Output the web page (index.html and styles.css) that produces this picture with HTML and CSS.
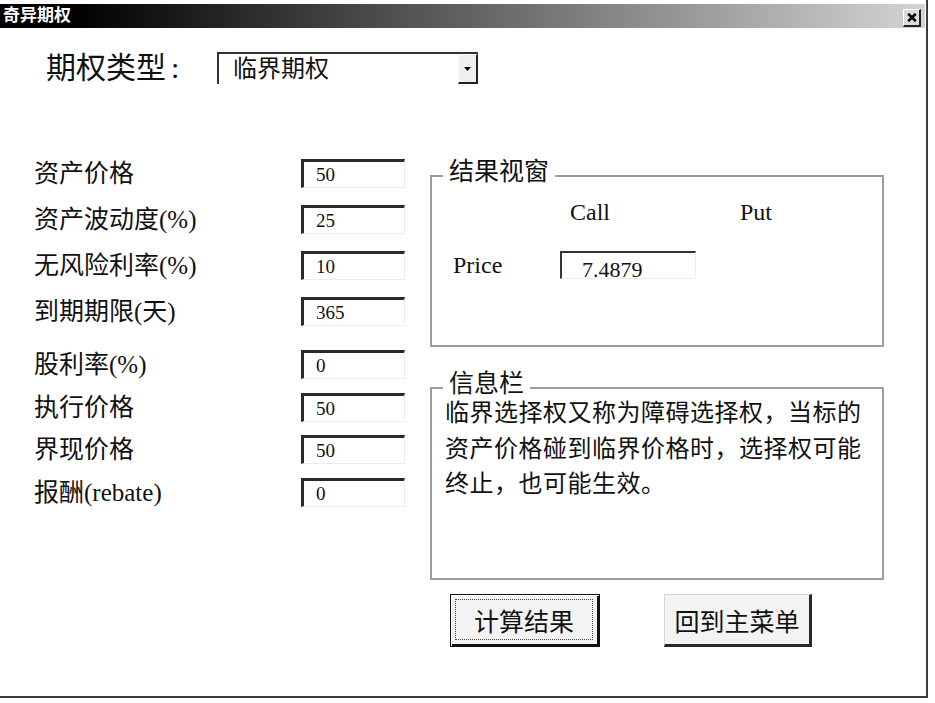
FILE: index.html
```html
<!DOCTYPE html>
<html lang="zh-CN">
<head>
<meta charset="utf-8">
<title>奇异期权</title>
<link rel="stylesheet" href="styles.css">
</head>
<body>
<div class="window">
  <div class="titlebar">
    <span class="title">奇异期权</span>
    <span class="close"><svg width="10" height="9" viewBox="0 0 10 9"><path d="M1.2 0.8 L8.8 8.2 M8.8 0.8 L1.2 8.2" stroke="#000" stroke-width="2.6" fill="none"/></svg></span>
  </div>
  <div class="type-row">
    <span class="type-label">期权类型<span class="colon">:</span></span>
    <div class="select">
      <span class="select-text">临界期权</span>
      <span class="select-btn"><svg width="7" height="4" viewBox="0 0 7 4"><path d="M0 0H7L3.5 4Z" fill="#000"/></svg></span>
    </div>
  </div>
  <div class="main">
    <div class="params">
      <div class="group g1">
        <div class="row"><span class="label">资产价格</span><span class="field">50</span></div>
        <div class="row"><span class="label">资产波动度(%)</span><span class="field">25</span></div>
        <div class="row"><span class="label">无风险利率(%)</span><span class="field">10</span></div>
        <div class="row"><span class="label">到期期限(天)</span><span class="field">365</span></div>
      </div>
      <div class="group g2">
        <div class="row"><span class="label">股利率(%)</span><span class="field">0</span></div>
        <div class="row"><span class="label">执行价格</span><span class="field">50</span></div>
        <div class="row"><span class="label">界现价格</span><span class="field">50</span></div>
        <div class="row"><span class="label">报酬(rebate)</span><span class="field">0</span></div>
      </div>
    </div>
    <div class="side">
      <fieldset class="frame result">
        <legend>结果视窗</legend>
        <div class="result-grid">
          <span></span><span class="col-head call">Call</span><span class="col-head">Put</span>
          <span class="price-label">Price</span><span class="price-box">7.4879</span><span></span>
        </div>
      </fieldset>
      <fieldset class="frame info">
        <legend>信息栏</legend>
        <p class="info-text">临界选择权又称为障碍选择权，当标的资产价格碰到临界价格时，选择权可能终止，也可能生效。</p>
      </fieldset>
      <div class="buttons">
        <button class="btn btn-default"><span class="focus">计算结果</span></button>
        <button class="btn btn-plain">回到主菜单</button>
      </div>
    </div>
  </div>
</div>
</body>
</html>
```
FILE: styles.css
```css
body {
  margin: 0;
  background: #fff;
  color: #111;
  font-family: "Liberation Serif", "Noto Sans CJK SC", serif;
}

.window {
  width: 928px;
  height: 698px;
  box-sizing: border-box;
  padding-top: 4px;
  border-right: 2px solid #3c3c3c;
  border-bottom: 2px solid #3c3c3c;
}

.titlebar {
  height: 24px;
  margin-right: 1px;
  display: flex;
  justify-content: space-between;
  align-items: flex-start;
  background: linear-gradient(to right, #000 0%, #000 8%, #d4d4d4 100%);
}

.title {
  color: #fff;
  font-family: "Noto Sans CJK SC", sans-serif;
  font-weight: 700;
  font-size: 17px;
  line-height: 20px;
  padding-left: 3px;
}

.close {
  margin: 5px 4px 0 0;
  width: 18px;
  height: 18px;
  box-sizing: border-box;
  background: #dcdcdc;
  border-top: 1px solid #fff;
  border-left: 1px solid #fff;
  border-right: 2px solid #222;
  border-bottom: 2px solid #222;
  display: flex;
  align-items: center;
  justify-content: center;
}

.type-row {
  display: flex;
  align-items: center;
  height: 32px;
  margin-top: 24px;
  padding-left: 46px;
}

.type-label {
  width: 171px;
  font-size: 30px;
  line-height: 32px;
  white-space: nowrap;
}

.colon {
  margin-left: 5px;
}

.select {
  width: 261px;
  height: 32px;
  box-sizing: border-box;
  border-top: 2px solid #333;
  border-left: 2px solid #333;
  display: flex;
}

.select-text {
  flex: 1;
  font-size: 24px;
  line-height: 30px;
  padding-left: 14px;
}

.select-btn {
  width: 20px;
  box-sizing: border-box;
  background: #efefef;
  border-top: 1px solid #fff;
  border-left: 1px solid #fff;
  border-right: 2px solid #222;
  border-bottom: 2px solid #222;
  display: flex;
  align-items: center;
  justify-content: center;
}

.main {
  display: flex;
  margin-top: 75px;
}

.params {
  padding-left: 34px;
}

.row {
  display: flex;
  align-items: center;
  height: 29px;
}

.g1 .row + .row {
  margin-top: 17px;
}

.g2 {
  margin-top: 24px;
}

.g2 .row + .row {
  margin-top: 13.5px;
}

.label {
  width: 267px;
  font-size: 25px;
  line-height: 29px;
  white-space: nowrap;
}

.field {
  width: 104px;
  height: 29px;
  box-sizing: border-box;
  border-top: 3px solid #2a2a2a;
  border-left: 3px solid #2a2a2a;
  border-right: 1px solid #ececec;
  border-bottom: 1px solid #ececec;
  padding-left: 12px;
  font-size: 19px;
  line-height: 25px;
}

.side {
  margin-left: 25px;
  width: 454px;
}

.frame {
  margin: 0;
  padding: 0;
  min-width: 0;
  border: 2px solid #9d9d9d;
}

.frame legend {
  font-size: 25px;
  line-height: 25px;
  padding: 0 6px 8px;
  margin-left: 11px;
}

.result-grid {
  display: grid;
  grid-template-columns: 107px 180px 1fr;
  grid-template-rows: 28px 28px;
  row-gap: 25px;
  align-content: start;
  height: 153px;
  box-sizing: border-box;
  padding: 6px 0 0 21px;
}

.col-head,
.price-label {
  font-size: 24px;
  line-height: 28px;
}

.call {
  padding-left: 10px;
}

.price-box {
  width: 136px;
  height: 28px;
  box-sizing: border-box;
  border-top: 2px solid #333;
  border-left: 2px solid #333;
  border-right: 1px solid #ececec;
  border-bottom: 1px solid #ececec;
  padding: 5px 0 0 20px;
  font-size: 22px;
  line-height: 24px;
}

.info {
  margin-top: 24px;
}

.info-text {
  margin: -8px 0 0;
  padding-left: 13px;
  width: 430px;
  height: 182px;
  font-size: 24px;
  line-height: 35.5px;
  letter-spacing: 0.5px;
}

.buttons {
  display: flex;
  gap: 64px;
  margin-top: 14px;
  padding-left: 20px;
}

.btn {
  height: 53px;
  box-sizing: border-box;
  padding: 0;
  font-family: inherit;
  font-size: 25px;
  color: #111;
  background: #f3f3f3;
}

.btn-default {
  width: 150px;
  display: flex;
  padding: 4px 6px 6px 4px;
  border: 1px solid #111;
  box-shadow: inset 1px 1px 0 #fff, inset -2px -2px 0 #111;
}

.focus {
  flex: 1;
  display: flex;
  align-items: center;
  justify-content: center;
  border: 1px dotted #444;
}

.btn-plain {
  width: 148px;
  border-top: 1px solid #d8d8d8;
  border-left: 1px solid #d8d8d8;
  border-right: 3px solid #2a2a2a;
  border-bottom: 3px solid #2a2a2a;
}
```
